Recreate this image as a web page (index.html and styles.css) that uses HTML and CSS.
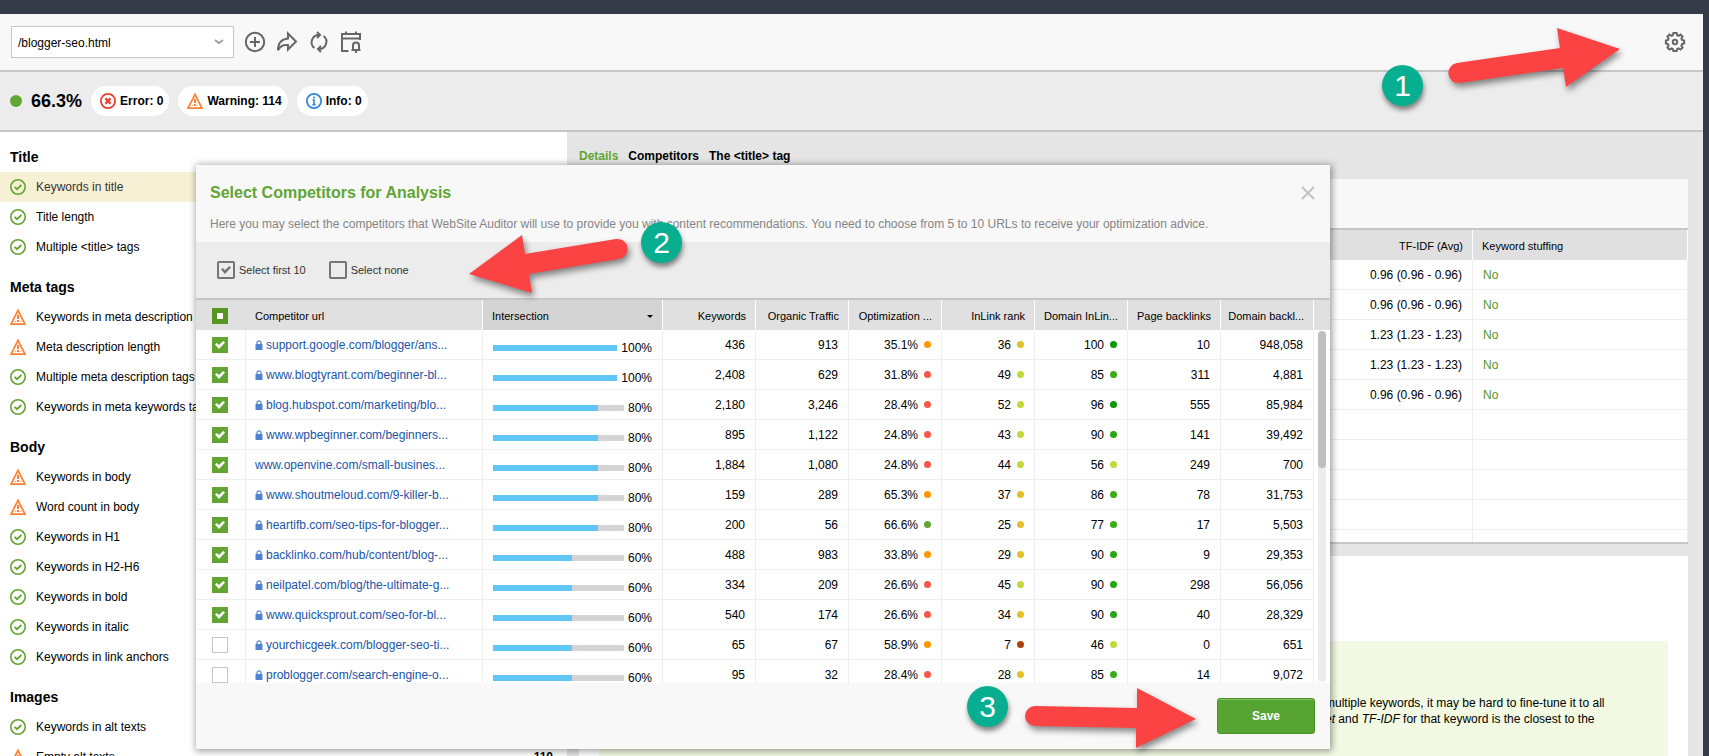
FILE: index.html
```html
<!DOCTYPE html>
<html lang="en">
<head>
    <meta charset="UTF-8">
    <meta name="viewport" content="width=device-width, initial-scale=1.0">
    <title>WebSite Auditor - Select Competitors</title>
    <link rel="stylesheet" href="styles.css">
</head>
<body>
    <svg class="sprite" aria-hidden="true">
        <symbol id="ok" viewBox="0 0 16 16">
            <circle cx="8" cy="8" r="7.2" fill="none" stroke="#62a532" stroke-width="1.6"/>
            <path d="M4.6 7.8 7 10.2 11.4 6" fill="none" stroke="#62a532" stroke-width="1.8"/>
        </symbol>
        <symbol id="warn" viewBox="0 0 16 16">
            <path d="M8 1.4 15 15.2H1Z" fill="none" stroke="#ff8136" stroke-width="1.8"/>
            <path d="M8 6v4M8 11v2" stroke="#ff8136" stroke-width="2"/>
            <path d="M5.2 12.4h1M9.8 12.4h1" stroke="#ff8136" stroke-width="1"/>
        </symbol>
        <symbol id="error" viewBox="0 0 16 16">
            <circle cx="8" cy="8" r="7.1" fill="none" stroke="#e8402f" stroke-width="1.8"/>
            <path d="M5.4 5.4l5.2 5.2M10.6 5.4l-5.2 5.2" stroke="#e8402f" stroke-width="2.2"/>
        </symbol>
        <symbol id="info" viewBox="0 0 16 16">
            <circle cx="8" cy="8" r="7.1" fill="none" stroke="#2f87d8" stroke-width="1.8"/>
            <path d="M8 3.6v2M6.6 7H8v4.6M6.4 11.8h3.2" fill="none" stroke="#2f87d8" stroke-width="1.6"/>
        </symbol>
        <symbol id="lock" viewBox="0 0 8 10">
            <path d="M2 5V2.8a2 2 0 0 1 4 0V5" fill="none" stroke="#4f83d0" stroke-width="1.2"/>
            <rect x="0.5" y="4" width="7" height="6" rx="0.6" fill="#4f83d0"/>
        </symbol>
    </svg>

    <div class="app">
        <header class="toolbar">
            <select class="page-select" aria-label="Page">
                <option>/blogger-seo.html</option>
            </select>
            <button class="tool" type="button" aria-label="Add">
                <svg width="22" height="22" viewBox="0 0 22 22"><circle cx="11" cy="11" r="9.2"/><path d="M11 6v10M6 11h10"/></svg>
            </button>
            <button class="tool" type="button" aria-label="Share">
                <svg width="22" height="22" viewBox="0 0 22 22"><path d="M12 2.5 20 10.5 12 18.5V14C7 13.4 4 15 2 19.2 2 12 5.6 8 12 7.4Z"/></svg>
            </button>
            <button class="tool" type="button" aria-label="Rebuild">
                <svg width="22" height="22" viewBox="0 0 22 22"><path d="M6.4 17A7.3 7.3 0 0 1 11.5 4M15.6 5A7.3 7.3 0 0 1 10.5 18"/><path d="M9 1l3 3-3 3M13 15l-3 3 3 3"/></svg>
            </button>
            <button class="tool" type="button" aria-label="Schedule">
                <svg width="22" height="22" viewBox="0 0 22 22"><path d="M8.5 20H2V3h18v6M2 7.5h18M6 .5v3M16 .5v3"/><path d="M11.5 19h9M13 19v-4.500a3 3 0 0 1 6 0V19M15 21h2"/></svg>
            </button>
            <button class="tool settings" type="button" aria-label="Settings">
                <svg width="22" height="22" viewBox="0 0 22 22"><path d="M9.4 2h3.2l.6 2.2 1.4.6 2-1.2 2 2-1.2 2 .6 1.4 2.1.5v3l-2.1.6-.6 1.5 1.2 2-2 2-2-1.2-1.4.6-.6 2H9.400l-.6-2-1.4-.6-2 1.2-2-2 1.2-2-.6-1.500L1.900 12.500v-3L4 9l.6-1.400-1.200-2 2-2 2 1.200 1.400-.6Z"/><circle cx="11" cy="11" r="2.200"/></svg>
            </button>
        </header>

        <div class="score-bar">
            <span class="score-dot"></span>
            <strong class="score">66.3%</strong>
            <span class="pill"><svg class="icon"><use href="#error"/></svg>Error: 0</span>
            <span class="pill"><svg class="icon"><use href="#warn"/></svg>Warning: 114</span>
            <span class="pill"><svg class="icon"><use href="#info"/></svg>Info: 0</span>
        </div>

        <main class="content">
            <nav class="factors">
                <h2>Title</h2>
                <ul>
                    <li class="active"><svg class="icon"><use href="#ok"/></svg>Keywords in title</li>
                    <li><svg class="icon"><use href="#ok"/></svg>Title length</li>
                    <li><svg class="icon"><use href="#ok"/></svg>Multiple &lt;title&gt; tags</li>
                </ul>
                <h2>Meta tags</h2>
                <ul>
                    <li><svg class="icon"><use href="#warn"/></svg>Keywords in meta description</li>
                    <li><svg class="icon"><use href="#warn"/></svg>Meta description length</li>
                    <li><svg class="icon"><use href="#ok"/></svg>Multiple meta description tags</li>
                    <li><svg class="icon"><use href="#ok"/></svg>Keywords in meta keywords tag</li>
                </ul>
                <h2>Body</h2>
                <ul>
                    <li><svg class="icon"><use href="#warn"/></svg>Keywords in body</li>
                    <li><svg class="icon"><use href="#warn"/></svg>Word count in body</li>
                    <li><svg class="icon"><use href="#ok"/></svg>Keywords in H1</li>
                    <li><svg class="icon"><use href="#ok"/></svg>Keywords in H2-H6</li>
                    <li><svg class="icon"><use href="#ok"/></svg>Keywords in bold</li>
                    <li><svg class="icon"><use href="#ok"/></svg>Keywords in italic</li>
                    <li><svg class="icon"><use href="#ok"/></svg>Keywords in link anchors</li>
                </ul>
                <h2>Images</h2>
                <ul>
                    <li><svg class="icon"><use href="#ok"/></svg>Keywords in alt texts</li>
                    <li><svg class="icon"><use href="#warn"/></svg>Empty alt texts <b class="count">110</b></li>
                </ul>
            </nav>

            <section class="details">
                <div class="tabs">
                    <a href="#details" class="current">Details</a>
                    <a href="#competitors">Competitors</a>
                    <a href="#tag">The &lt;title&gt; tag</a>
                </div>
                <div class="panel keywords-panel">
                    <div class="panel-bar"></div>
                    <table class="grid keywords">
                        <colgroup><col><col class="stuffing-col"></colgroup>
                        <thead><tr><th class="num">TF-IDF (Avg)</th><th>Keyword stuffing</th></tr></thead>
                        <tbody>
                            <tr><td class="num">0.96 (0.96 - 0.96)</td><td class="no">No</td></tr>
                            <tr><td class="num">0.96 (0.96 - 0.96)</td><td class="no">No</td></tr>
                            <tr><td class="num">1.23 (1.23 - 1.23)</td><td class="no">No</td></tr>
                            <tr><td class="num">1.23 (1.23 - 1.23)</td><td class="no">No</td></tr>
                            <tr><td class="num">0.96 (0.96 - 0.96)</td><td class="no">No</td></tr>
                            <tr><td></td><td></td></tr>
                            <tr><td></td><td></td></tr>
                            <tr><td></td><td></td></tr>
                            <tr><td></td><td></td></tr>
                            <tr><td></td><td></td></tr>
                        </tbody>
                    </table>
                </div>
                <div class="panel advice-panel">
                    <div class="advice">
                        <p>multiple keywords, it may be hard to fine-tune it to all<br><i>et</i> and <i>TF-IDF</i> for that keyword is the closest to the</p>
                    </div>
                </div>
            </section>
        </main>
    </div>

    <div class="dialog" role="dialog" aria-labelledby="dialog-title">
        <div class="dialog-head">
            <div class="dialog-title-row">
                <h1 id="dialog-title">Select Competitors for Analysis</h1>
                <button class="close" type="button" aria-label="Close"><svg width="14" height="14" viewBox="0 0 14 14"><path d="M1 1l12 12M13 1L1 13"/></svg></button>
            </div>
            <p>Here you may select the competitors that WebSite Auditor will use to provide you with content recommendations. You need to choose from 5 to 10 URLs to receive your optimization advice.</p>
        </div>
        <div class="options">
            <label><input class="opt" type="checkbox" checked>Select first 10</label>
            <label><input class="opt" type="checkbox">Select none</label>
        </div>
        <div class="table-wrap">
            <table class="grid competitors">
                <colgroup>
                    <col class="check-col"><col><col class="bar-col">
                    <col class="num-col"><col class="num-col"><col class="num-col"><col class="num-col"><col class="num-col"><col class="num-col"><col class="num-col">
                    <col class="scroll-col">
                </colgroup>
                <thead>
                    <tr>
                        <th class="check"><input class="box some" type="checkbox" aria-label="Select all"></th>
                        <th>Competitor url</th>
                        <th class="sorted"><span class="sort">Intersection<i class="caret"></i></span></th>
                        <th class="num">Keywords</th>
                        <th class="num">Organic Traffic</th>
                        <th class="num">Optimization ...</th>
                        <th class="num">InLink rank</th>
                        <th class="num">Domain InLin...</th>
                        <th class="num">Page backlinks</th>
                        <th class="num">Domain backl...</th>
                        <th></th>
                    </tr>
                </thead>
                <tbody>
                    <tr>
                        <td class="check"><input class="box" type="checkbox" aria-label="Select row" checked></td>
                        <td><a href="#"><svg class="lock"><use href="#lock"/></svg>support.google.com/blogger/ans...</a></td>
                        <td><div class="meter"><span class="track"><span class="fill" style="width: 100%"></span></span>100%</div></td>
                        <td class="num">436</td><td class="num">913</td>
                        <td class="num">35.1%<i class="dot orange"></i></td><td class="num">36<i class="dot yellow"></i></td><td class="num">100<i class="dot deep"></i></td>
                        <td class="num">10</td><td class="num">948,058</td><td></td>
                    </tr>
                    <tr>
                        <td class="check"><input class="box" type="checkbox" aria-label="Select row" checked></td>
                        <td><a href="#"><svg class="lock"><use href="#lock"/></svg>www.blogtyrant.com/beginner-bl...</a></td>
                        <td><div class="meter"><span class="track"><span class="fill" style="width: 100%"></span></span>100%</div></td>
                        <td class="num">2,408</td><td class="num">629</td>
                        <td class="num">31.8%<i class="dot red"></i></td><td class="num">49<i class="dot lime"></i></td><td class="num">85<i class="dot green"></i></td>
                        <td class="num">311</td><td class="num">4,881</td><td></td>
                    </tr>
                    <tr>
                        <td class="check"><input class="box" type="checkbox" aria-label="Select row" checked></td>
                        <td><a href="#"><svg class="lock"><use href="#lock"/></svg>blog.hubspot.com/marketing/blo...</a></td>
                        <td><div class="meter"><span class="track"><span class="fill" style="width: 80%"></span></span>80%</div></td>
                        <td class="num">2,180</td><td class="num">3,246</td>
                        <td class="num">28.4%<i class="dot red"></i></td><td class="num">52<i class="dot lime"></i></td><td class="num">96<i class="dot deep"></i></td>
                        <td class="num">555</td><td class="num">85,984</td><td></td>
                    </tr>
                    <tr>
                        <td class="check"><input class="box" type="checkbox" aria-label="Select row" checked></td>
                        <td><a href="#"><svg class="lock"><use href="#lock"/></svg>www.wpbeginner.com/beginners...</a></td>
                        <td><div class="meter"><span class="track"><span class="fill" style="width: 80%"></span></span>80%</div></td>
                        <td class="num">895</td><td class="num">1,122</td>
                        <td class="num">24.8%<i class="dot red"></i></td><td class="num">43<i class="dot lime"></i></td><td class="num">90<i class="dot rich"></i></td>
                        <td class="num">141</td><td class="num">39,492</td><td></td>
                    </tr>
                    <tr>
                        <td class="check"><input class="box" type="checkbox" aria-label="Select row" checked></td>
                        <td><a href="#">www.openvine.com/small-busines...</a></td>
                        <td><div class="meter"><span class="track"><span class="fill" style="width: 80%"></span></span>80%</div></td>
                        <td class="num">1,884</td><td class="num">1,080</td>
                        <td class="num">24.8%<i class="dot red"></i></td><td class="num">44<i class="dot lime"></i></td><td class="num">56<i class="dot lime"></i></td>
                        <td class="num">249</td><td class="num">700</td><td></td>
                    </tr>
                    <tr>
                        <td class="check"><input class="box" type="checkbox" aria-label="Select row" checked></td>
                        <td><a href="#"><svg class="lock"><use href="#lock"/></svg>www.shoutmeloud.com/9-killer-b...</a></td>
                        <td><div class="meter"><span class="track"><span class="fill" style="width: 80%"></span></span>80%</div></td>
                        <td class="num">159</td><td class="num">289</td>
                        <td class="num">65.3%<i class="dot orange"></i></td><td class="num">37<i class="dot yellow"></i></td><td class="num">86<i class="dot green"></i></td>
                        <td class="num">78</td><td class="num">31,753</td><td></td>
                    </tr>
                    <tr>
                        <td class="check"><input class="box" type="checkbox" aria-label="Select row" checked></td>
                        <td><a href="#"><svg class="lock"><use href="#lock"/></svg>heartifb.com/seo-tips-for-blogger...</a></td>
                        <td><div class="meter"><span class="track"><span class="fill" style="width: 80%"></span></span>80%</div></td>
                        <td class="num">200</td><td class="num">56</td>
                        <td class="num">66.6%<i class="dot leaf"></i></td><td class="num">25<i class="dot yellow"></i></td><td class="num">77<i class="dot green"></i></td>
                        <td class="num">17</td><td class="num">5,503</td><td></td>
                    </tr>
                    <tr>
                        <td class="check"><input class="box" type="checkbox" aria-label="Select row" checked></td>
                        <td><a href="#"><svg class="lock"><use href="#lock"/></svg>backlinko.com/hub/content/blog-...</a></td>
                        <td><div class="meter"><span class="track"><span class="fill" style="width: 60%"></span></span>60%</div></td>
                        <td class="num">488</td><td class="num">983</td>
                        <td class="num">33.8%<i class="dot orange"></i></td><td class="num">29<i class="dot yellow"></i></td><td class="num">90<i class="dot rich"></i></td>
                        <td class="num">9</td><td class="num">29,353</td><td></td>
                    </tr>
                    <tr>
                        <td class="check"><input class="box" type="checkbox" aria-label="Select row" checked></td>
                        <td><a href="#"><svg class="lock"><use href="#lock"/></svg>neilpatel.com/blog/the-ultimate-g...</a></td>
                        <td><div class="meter"><span class="track"><span class="fill" style="width: 60%"></span></span>60%</div></td>
                        <td class="num">334</td><td class="num">209</td>
                        <td class="num">26.6%<i class="dot red"></i></td><td class="num">45<i class="dot lime"></i></td><td class="num">90<i class="dot rich"></i></td>
                        <td class="num">298</td><td class="num">56,056</td><td></td>
                    </tr>
                    <tr>
                        <td class="check"><input class="box" type="checkbox" aria-label="Select row" checked></td>
                        <td><a href="#"><svg class="lock"><use href="#lock"/></svg>www.quicksprout.com/seo-for-bl...</a></td>
                        <td><div class="meter"><span class="track"><span class="fill" style="width: 60%"></span></span>60%</div></td>
                        <td class="num">540</td><td class="num">174</td>
                        <td class="num">26.6%<i class="dot red"></i></td><td class="num">34<i class="dot yellow"></i></td><td class="num">90<i class="dot rich"></i></td>
                        <td class="num">40</td><td class="num">28,329</td><td></td>
                    </tr>
                    <tr>
                        <td class="check"><input class="box" type="checkbox" aria-label="Select row"></td>
                        <td><a href="#"><svg class="lock"><use href="#lock"/></svg>yourchicgeek.com/blogger-seo-ti...</a></td>
                        <td><div class="meter"><span class="track"><span class="fill" style="width: 60%"></span></span>60%</div></td>
                        <td class="num">65</td><td class="num">67</td>
                        <td class="num">58.9%<i class="dot orange"></i></td><td class="num">7<i class="dot brown"></i></td><td class="num">46<i class="dot lime"></i></td>
                        <td class="num">0</td><td class="num">651</td><td></td>
                    </tr>
                    <tr>
                        <td class="check"><input class="box" type="checkbox" aria-label="Select row"></td>
                        <td><a href="#"><svg class="lock"><use href="#lock"/></svg>problogger.com/search-engine-o...</a></td>
                        <td><div class="meter"><span class="track"><span class="fill" style="width: 60%"></span></span>60%</div></td>
                        <td class="num">95</td><td class="num">32</td>
                        <td class="num">28.4%<i class="dot red"></i></td><td class="num">28<i class="dot yellow"></i></td><td class="num">85<i class="dot green"></i></td>
                        <td class="num">14</td><td class="num">9,072</td><td></td>
                    </tr>
                </tbody>
            </table>
            <div class="scrollbar"><div class="thumb"></div></div>
        </div>
        <div class="dialog-foot">
            <button class="save" type="button">Save</button>
        </div>
    </div>

    <!-- step markers -->
    <span class="step step-1">1</span>
    <span class="step step-2">2</span>
    <span class="step step-3">3</span>
    <svg class="arrow arrow-1" width="180" height="66" viewBox="0 0 180 66"><path d="M174 22 111 1 114 21 11 36A10 10 0 0 0 14 56L117 41 120 60Z"/></svg>
    <svg class="arrow arrow-2" width="164" height="66" viewBox="0 0 164 66"><path d="M1 40 54 1 57 20 148 5A10 10 0 0 1 151 25L61 40 64 59Z"/></svg>
    <svg class="arrow arrow-3" width="178" height="66" viewBox="0 0 178 66"><path d="M172 32 113 1V21L11 19A10 10 0 0 0 11 39L112 41V61Z"/></svg>
</body>
</html>
```
FILE: styles.css
```css
* {
    box-sizing: border-box;
}
body {
    margin: 0;
    height: 100vh;
    overflow: hidden;
    position: relative;
    background: #353b49;
    color: #000;
    font: 12px/16px "Liberation Sans", Arial, sans-serif;
}
h1, h2, p, ul {
    margin: 0;
    padding: 0;
}
button {
    font: inherit;
    border: none;
    background: none;
    padding: 0;
    cursor: pointer;
}
.sprite {
    display: none;
}
.icon {
    width: 16px;
    height: 16px;
    flex: none;
}
.app {
    height: 100%;
    padding: 14px 6px 0 0;
    display: flex;
    flex-direction: column;
}

/* top bars */
.toolbar {
    flex: none;
    height: 58px;
    padding: 0 17px 0 11px;
    display: flex;
    align-items: center;
    gap: 10px;
    background: #f8f8f8;
    border-bottom: 2px solid #c6c6c6;
}
.page-select {
    width: 223px;
    height: 32px;
    padding: 2px 6px 0;
    appearance: none;
    border: 1px solid #c6c6c6;
    border-radius: 0;
    color: #000;
    font: inherit;
    background: #fff url("data:image/svg+xml,%3Csvg xmlns='http://www.w3.org/2000/svg' width='10' height='6'%3E%3Cpath d='M1 1L5 4L9 1' fill='none' stroke='%23a0a0a0' stroke-width='2'/%3E%3C/svg%3E") no-repeat right 9px center;
}
.tool {
    width: 22px;
    height: 22px;
}
.tool svg {
    display: block;
    fill: none;
    stroke: #666;
    stroke-width: 2;
}
.tool.settings {
    margin-left: auto;
}
.score-bar {
    flex: none;
    height: 60px;
    padding: 0 10px;
    display: flex;
    align-items: center;
    gap: 9px;
    background: #ececec;
    border-bottom: 2px solid #c6c6c6;
}
.score-dot {
    width: 12px;
    height: 12px;
    border-radius: 50%;
    background: #62a532;
}
.score {
    font-size: 18px;
}
.pill {
    height: 30px;
    padding: 0 6px 0 9px;
    display: flex;
    align-items: center;
    gap: 4px;
    border-radius: 15px;
    background: #fff;
    font-weight: bold;
}

/* left list */
.content {
    flex: 1;
    min-height: 0;
    display: flex;
    overflow: hidden;
}
.factors {
    flex: none;
    width: 567px;
    background: #fff;
}
.factors h2 {
    height: 40px;
    padding: 16px 10px 0;
    font-size: 14px;
    line-height: 18px;
}
.factors ul {
    list-style: none;
}
.factors li {
    height: 30px;
    padding: 0 14px 0 10px;
    display: flex;
    align-items: center;
    gap: 10px;
    line-height: 18px;
}
.factors .active {
    background: #f8f0d4;
    color: #333;
}
.count {
    margin-left: auto;
}

/* right side */
.details {
    flex: 1;
    min-width: 0;
    padding: 0 15px 0 12px;
    background: #e5e5e5;
    display: flex;
    flex-direction: column;
}
.tabs {
    flex: none;
    height: 47px;
    padding-top: 16px;
    display: flex;
    gap: 10px;
}
.tabs a {
    color: #000;
    font-weight: bold;
    text-decoration: none;
}
.tabs .current {
    color: #62a532;
}
.panel {
    background: #fff;
}
.keywords-panel {
    flex: none;
    height: 365px;
    overflow: hidden;
    border-bottom: 2px solid #c6c6c6;
}
.panel-bar {
    height: 51px;
    background: #f8f8f8;
    border-bottom: 2px solid #c6c6c6;
}
.advice-panel {
    flex: 1;
    margin-top: 12px;
    padding: 85px 20px 0;
}
.advice {
    height: 100%;
    padding: 54px 0 0;
    background: #f2fae3;
}
.advice p {
    width: 343px;
    margin-left: auto;
    white-space: nowrap;
}

/* tables */
.grid {
    width: 100%;
    table-layout: fixed;
    border-collapse: separate;
    border-spacing: 0;
}
.grid th, .grid td {
    height: 30px;
    padding: 0 10px;
    text-align: left;
    white-space: nowrap;
    overflow: hidden;
}
.grid th {
    padding: 2px 9px 0;
    background: #e0e0e0;
    border-right: 1px solid #fff;
    font-size: 11px;
    font-weight: normal;
}
.grid td {
    border-right: 1px solid #eee;
    border-bottom: 1px solid #eee;
}
.grid .num {
    text-align: right;
    padding-left: 4px;
}
.grid .no {
    color: #55962b;
}
.stuffing-col {
    width: 215px;
}

/* dialog */
.dialog {
    position: absolute;
    top: 165px;
    left: 196px;
    right: 379px;
    background: #f8f8f8;
    box-shadow: 1px 1px 7px 1px rgba(0, 0, 0, 0.4);
}
.dialog-head {
    height: 77px;
    padding: 18px 15px 0 14px;
}
.dialog-title-row {
    display: flex;
    align-items: center;
    justify-content: space-between;
    height: 20px;
}
.dialog h1 {
    color: #62a532;
    font-size: 16px;
    line-height: 20px;
}
.dialog-head p {
    margin-top: 13px;
    color: #858585;
    white-space: nowrap;
}
.close {
    width: 14px;
    height: 14px;
}
.close svg {
    display: block;
    stroke: #c2c2c2;
    stroke-width: 2;
}
.options {
    height: 58px;
    padding: 0 21px;
    display: flex;
    align-items: center;
    gap: 23px;
    background: #ececec;
    border-bottom: 2px solid #c6c6c6;
    color: #333;
    font-size: 11px;
    line-height: 18px;
}
.options label {
    display: flex;
    align-items: center;
    gap: 4px;
}
.opt, .box {
    appearance: none;
    margin: 0;
    display: inline-flex;
    align-items: center;
    justify-content: center;
}
.opt {
    width: 18px;
    height: 18px;
    border: 2px solid #757575;
    border-radius: 2px;
}
.opt::before, .box::before {
    content: "";
    width: 10px;
    height: 8px;
    clip-path: polygon(0 45%, 18% 25%, 40% 52%, 82% 0, 100% 20%, 40% 100%);
}
.opt:checked::before {
    background: #757575;
}
.table-wrap {
    position: relative;
    height: 383px;
    overflow: hidden;
    background: #fff;
}
.check-col {
    width: 50px;
}
.bar-col {
    width: 180px;
}
.num-col {
    width: 93px;
}
.scroll-col {
    width: 16px;
}
.competitors th:first-child,
.competitors th:last-child,
.competitors td:last-child {
    border-right: none;
}
.competitors td:last-child {
    border-bottom: none;
}
.competitors .sorted {
    background: #d4d4d4;
}
.competitors td:nth-child(2) {
    padding-left: 9px;
}
.sort {
    display: flex;
    align-items: center;
    justify-content: space-between;
}
.caret {
    border: 3px solid transparent;
    border-top-color: #000;
    border-bottom: none;
}
.grid .check {
    padding: 0 1px 0 0;
    text-align: center;
}
.competitors th.check {
    padding-right: 2px;
}
.box {
    width: 16px;
    height: 16px;
    vertical-align: middle;
    border: 1px solid #c6c6c6;
    background: #fff;
}
.box:checked {
    border-color: #62a532;
    background: #62a532;
}
.box:checked::before {
    background: #fff;
}
.box.some {
    border-color: #55961f;
    background: #55961f;
}
.box.some::before {
    width: 6px;
    height: 6px;
    background: #fff;
    clip-path: none;
}
.competitors a {
    display: flex;
    align-items: center;
    gap: 3px;
    color: #1a55a8;
    text-decoration: none;
}
.lock {
    width: 8px;
    height: 10px;
}
.meter {
    display: flex;
    align-items: center;
    gap: 4px;
    padding-top: 7px;
}
.track {
    flex: 1;
    height: 6px;
    background: #d4d4d4;
}
.fill {
    display: block;
    height: 100%;
    background: #5fc6f6;
}
.dot {
    display: inline-block;
    width: 7px;
    height: 7px;
    margin-left: 6px;
    border-radius: 50%;
    vertical-align: 1px;
}
.orange { background: #ff9800; }
.red { background: #f55846; }
.leaf { background: #62a532; }
.yellow { background: #e2c02a; }
.lime { background: #c3d93b; }
.green { background: #3aab1b; }
.rich { background: #27a514; }
.deep { background: #0a9a08; }
.brown { background: #ab450c; }
.scrollbar {
    position: absolute;
    top: 31px;
    right: 4px;
    bottom: 1px;
    width: 8px;
    border-radius: 4px;
    background: #ececec;
}
.thumb {
    height: 137px;
    border-radius: 4px;
    background: #bfbfbf;
}
.dialog-foot {
    height: 66px;
    padding: 0 15px;
    display: flex;
    align-items: center;
    justify-content: flex-end;
}
.save {
    width: 98px;
    height: 36px;
    border: 1px solid #4a9227;
    border-radius: 3px;
    background: #57a432;
    box-shadow: inset 0 1px #7cc05b;
    color: #fff;
    font-weight: bold;
}

/* step markers over the window */
.step {
    position: absolute;
    width: 41px;
    height: 41px;
    border-radius: 50%;
    background: #08ae90;
    box-shadow: 1px 4px 5px rgba(0, 0, 0, 0.45);
    color: #fff;
    font-size: 30px;
    line-height: 41px;
    text-align: center;
}
.step-1 {
    top: 65px;
    right: 286px;
}
.step-2 {
    top: 222px;
    left: 641px;
}
.step-3 {
    top: 686px;
    left: 967px;
}
.arrow {
    position: absolute;
    overflow: visible;
    fill: #fb4343;
    filter: drop-shadow(2px 4px 3px rgba(0, 0, 0, 0.45));
}
.arrow-1 {
    top: 27px;
    right: 83px;
}
.arrow-2 {
    top: 234px;
    left: 468px;
}
.arrow-3 {
    top: 687px;
    left: 1024px;
}
```
